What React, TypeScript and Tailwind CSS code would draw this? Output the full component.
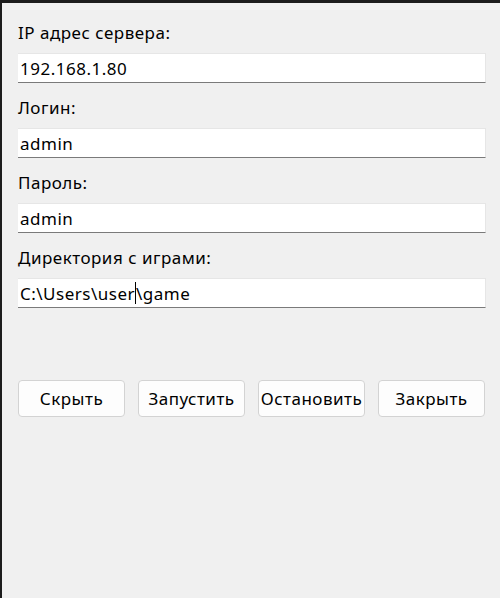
import React from 'react';

const font = { fontFamily: '"Noto Sans", "Open Sans", Arial, sans-serif' };

interface FieldProps {
  label: string;
  value: string;
  caretAt?: number;
  first?: boolean;
}

function Field({ label, value, caretAt, first }: FieldProps) {
  const before = caretAt !== undefined ? value.slice(0, caretAt) : value;
  const after = caretAt !== undefined ? value.slice(caretAt) : '';

  return (
    <div className="flex flex-col">
      <div className={`h-[22px] leading-[22px] text-[17px] tracking-[0.5px] text-black ${first ? 'mt-[19px]' : 'mt-[14px]'} mb-[9px]`}>
        {label}
      </div>
      <div className="h-[30px] w-[468px] bg-white border-t border-r border-[#e6e6e6] border-b border-b-[#7a7a7a] flex items-center pl-[2px] text-[17px] tracking-[0.5px] text-black leading-none">
        <span className="whitespace-pre">{before}</span>
        {caretAt !== undefined && <span className="inline-block w-px h-[22px] bg-black" />}
        <span className="whitespace-pre">{after}</span>
      </div>
    </div>
  );
}

function Btn({ children }: { children: React.ReactNode }) {
  return (
    <button className="w-[107px] h-[37px] rounded-[4px] border border-[#d3d3d3] bg-[#fdfdfd] text-[17px] tracking-[0.5px] text-black flex items-center justify-center whitespace-nowrap">
      {children}
    </button>
  );
}

export default function App() {
  return (
    <div
      className="w-[500px] h-[598px] bg-[#f0f0f0] border-t-[3px] border-l-[2px] border-[#1c1c1c] overflow-hidden"
      style={font}
    >
      <div className="pl-[16px] flex flex-col">
        <Field label="IP адрес сервера:" value="192.168.1.80" first />
        <Field label="Логин:" value="admin" />
        <Field label="Пароль:" value="admin" />
        <Field label="Директория с играми:" value="C:\Users\user\game" caretAt={13} />
        <div className="mt-[72px] flex gap-[13px]">
          <Btn>Скрыть</Btn>
          <Btn>Запустить</Btn>
          <Btn>Остановить</Btn>
          <Btn>Закрыть</Btn>
        </div>
      </div>
    </div>
  );
}
